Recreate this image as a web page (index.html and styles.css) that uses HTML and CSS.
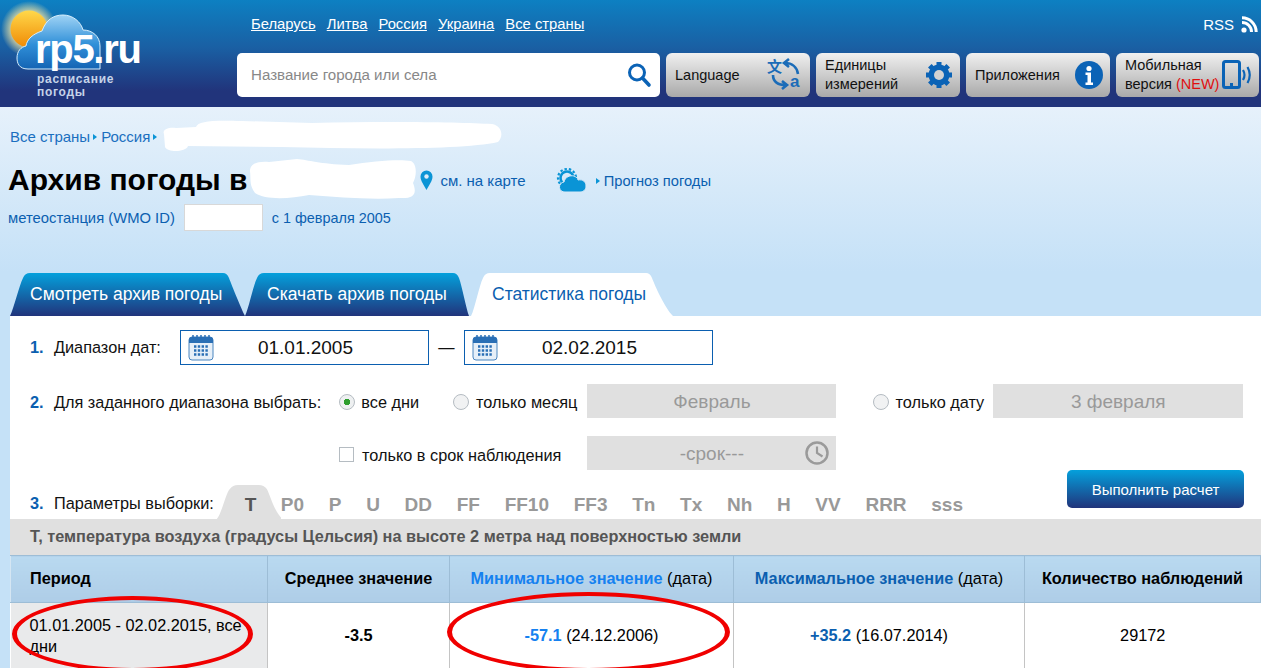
FILE: index.html
```html
<!DOCTYPE html>
<html lang="ru">
<head>
    <meta charset="UTF-8">
    <title>Архив погоды - rp5.ru</title>
    <link rel="stylesheet" href="styles.css">
</head>
<body>
    <header class="site-header">
        <a class="logo" href="#">
            <svg class="logo-art" width="110" height="75" viewBox="0 0 110 75">
                <defs>
                    <radialGradient id="sunGlow"><stop offset="0.6" stop-color="#ffe9a0" stop-opacity="0.8"/><stop offset="1" stop-color="#ffe9a0" stop-opacity="0"/></radialGradient>
                    <linearGradient id="sunFill" x1="0" y1="0" x2="0" y2="1"><stop offset="0" stop-color="#ffd84a"/><stop offset="1" stop-color="#f08a05"/></linearGradient>
                    <linearGradient id="cloudFill" x1="0" y1="0" x2="0" y2="1"><stop offset="0" stop-color="#9fd3f5"/><stop offset="0.55" stop-color="#2f8fd8"/><stop offset="1" stop-color="#1464b4"/></linearGradient>
                </defs>
                <circle cx="29" cy="29" r="28" fill="url(#sunGlow)"/>
                <circle cx="29" cy="29" r="18.5" fill="url(#sunFill)"/>
                <path d="M28 69 C19 69 17 63 17 58 C17 51 21 47 26 46 C27 39 33 34 42 31 C46 20 53 15 63 15 C73 15 81 22 83 30 C92 30 100 36 100 46 L100 69 Z" fill="url(#cloudFill)" stroke="#d7eefc" stroke-width="1"/>
            </svg>
            <span class="logo-name">rp5.ru</span>
            <span class="logo-sub">расписание<br>погоды</span>
        </a>
        <div class="header-main">
            <div class="header-top">
                <nav class="country-nav">
                    <a href="#">Беларусь</a>
                    <a href="#">Литва</a>
                    <a href="#">Россия</a>
                    <a href="#">Украина</a>
                    <a href="#">Все страны</a>
                </nav>
                <a class="rss" href="#">RSS
                    <svg width="17" height="17" viewBox="0 0 17 17"><circle cx="3" cy="14" r="2.6" fill="#fff"/><path d="M1 6.5a9.5 9.5 0 0 1 9.5 9.5M1 1.8A14.2 14.2 0 0 1 15.2 16" fill="none" stroke="#fff" stroke-width="3"/></svg>
                </a>
            </div>
            <div class="tools">
                <div class="search">
                    <span class="search-hint">Название города или села</span>
                    <svg width="26" height="26" viewBox="0 0 26 26"><circle cx="11" cy="10.500" r="7.500" fill="none" stroke="#0b63b6" stroke-width="3"/><path d="M16.500 16l6.500 7" stroke="#0b63b6" stroke-width="3.600" stroke-linecap="round"/></svg>
                </div>
                <a class="tool-btn" href="#">
                    <span>Language</span>
                    <svg width="36" height="40" viewBox="0 -3 36 40">
                        <text x="0" y="14" class="ic-zh">文</text>
                        <text x="23" y="29" class="ic-a">a</text>
                        <path d="M22 1l-5 4 5 4M18 5c7 0 12 4 13 11" fill="none" stroke="#1b6cb8" stroke-width="2.600"/>
                        <path d="M15 23l5 4-5 4M19 27c-8 0-13-3-13-10" fill="none" stroke="#1b6cb8" stroke-width="2.600"/>
                    </svg>
                </a>
                <a class="tool-btn" href="#">
                    <span>Единицы<br>измерений</span>
                    <svg width="28" height="28" viewBox="0 0 28 28"><circle cx="14" cy="14" r="7.500" fill="none" stroke="#0b63b6" stroke-width="6"/><path d="M14 1v26M1 14h26M4.800 4.800l18.400 18.400M23.200 4.800L4.800 23.200" stroke="#0b63b6" stroke-width="5"/><circle cx="14" cy="14" r="5" fill="#d2d2d2"/></svg>
                </a>
                <a class="tool-btn" href="#">
                    <span>Приложения</span>
                    <svg width="28" height="28" viewBox="0 0 28 28"><circle cx="14" cy="14" r="14" fill="#0b63b6"/><circle cx="14" cy="7.500" r="2.600" fill="#fff"/><path d="M10.500 11.500h5.500v10h2v2.500h-7.500v-2.500h2v-7.500h-2z" fill="#fff"/></svg>
                </a>
                <a class="tool-btn mobile-btn" href="#">
                    <span>Мобильная<br>версия <em>(NEW)</em></span>
                    <svg width="32" height="30" viewBox="0 0 32 30"><rect x="1.500" y="1.500" width="16" height="26" rx="2" fill="none" stroke="#0b63b6" stroke-width="3"/><rect x="8" y="23" width="3" height="3" fill="#0b63b6"/><path d="M21 10q3 5 0 10M25.500 7q4.500 8 0 16" fill="none" stroke="#0b63b6" stroke-width="2.200"/></svg>
                </a>
            </div>
        </div>
    </header>

    <main class="page">
        <div class="crumbs">
            <a href="#">Все страны</a><i class="arrow"></i><a href="#">Россия</a><i class="arrow"></i>
            <svg class="blob-crumb" width="342" height="32" viewBox="0 0 342 32"><path d="M2 14C0 10 6 7 14 8L34 7C36 1 50 0 80 1L150 3C220 1 300 2 330 4C340 6 342 16 336 22C300 30 200 29 120 27L26 26C24 32 6 33 3 27Z" fill="#fff"/></svg>
        </div>
        <div class="title-row">
            <h1>Архив погоды в</h1>
            <svg class="blob-title" width="168" height="42" viewBox="0 0 168 42"><path d="M1 12C1 4 10 2 20 3L48 0C60 1 70 5 100 6C125 2 150 0 162 2C168 5 168 16 164 24C168 34 166 40 150 39C120 41 90 38 60 36C40 40 16 41 6 34C0 26 2 20 1 12Z" fill="#fff"/></svg>
            <a class="map-link" href="#">
                <svg width="13" height="21" viewBox="0 0 13 21"><path d="M6.500 20C4 15 .5 11 .5 6.500a6 6 0 0 1 12 0C12.500 11 9 15 6.500 20z" fill="#0a94d6"/><circle cx="6.500" cy="6.500" r="2.200" fill="#dcebf8"/></svg>
                см. на карте
            </a>
            <svg class="forecast-icon" width="31" height="26" viewBox="0 0 31 26">
                <circle cx="11" cy="11" r="6.500" fill="none" stroke="#0a94d6" stroke-width="2.600"/>
                <circle cx="11" cy="11" r="9" fill="none" stroke="#0a94d6" stroke-width="2.200" stroke-dasharray="2.400 2"/>
                <path d="M9 25a5 5 0 0 1-1-10c1-5 6-7 10-6 2 1 4 2 4 4 5-1 8 2 8 6s-3 6-6 6z" fill="#0a94d6" stroke="#d8e9f8" stroke-width="1"/>
            </svg>
            <i class="arrow arrow-forecast"></i><a class="forecast-link" href="#">Прогноз погоды</a>
        </div>
        <div class="station-row">
            <span>метеостанция (WMO ID)</span>
            <span class="station-id"></span>
            <span class="station-since">с 1 февраля 2005</span>
        </div>

        <div class="tabs">
            <a class="tab tab-view" href="#">Смотреть архив погоды</a>
            <a class="tab tab-load" href="#">Скачать архив погоды</a>
            <a class="tab tab-stat" href="#">Статистика погоды</a>
        </div>

        <section class="panel">
            <div class="form-row row-dates">
                <b class="num">1.</b>
                <span class="row-label">Диапазон дат:</span>
                <div class="date-field">
                    <svg width="26" height="27" viewBox="0 0 26 27"><rect x="1" y="3" width="24" height="23" rx="3" fill="#e6eff8" stroke="#4b86c0"/><path d="M1 9V6a3 3 0 0 1 3-3h18a3 3 0 0 1 3 3v3z" fill="#2a6fb5"/><path d="M5 1v5M9 1v5M13 1v5M17 1v5M21 1v5" stroke="#2a6fb5" stroke-width="1.500"/><path d="M6 12.500h14M6 16.500h14M6 20.500h14" stroke="#2a6fb5" stroke-width="2.400" stroke-dasharray="2.400 1.400"/></svg>
                    <span>01.01.2005</span>
                </div>
                <span class="dash">—</span>
                <div class="date-field">
                    <svg width="26" height="27" viewBox="0 0 26 27"><rect x="1" y="3" width="24" height="23" rx="3" fill="#e6eff8" stroke="#4b86c0"/><path d="M1 9V6a3 3 0 0 1 3-3h18a3 3 0 0 1 3 3v3z" fill="#2a6fb5"/><path d="M5 1v5M9 1v5M13 1v5M17 1v5M21 1v5" stroke="#2a6fb5" stroke-width="1.500"/><path d="M6 12.500h14M6 16.500h14M6 20.500h14" stroke="#2a6fb5" stroke-width="2.400" stroke-dasharray="2.400 1.400"/></svg>
                    <span>02.02.2015</span>
                </div>
            </div>

            <div class="form-row row-range">
                <b class="num">2.</b>
                <span class="row-label">Для заданного диапазона выбрать:</span>
                <i class="radio radio-on"></i><span class="opt-all">все дни</span>
                <i class="radio"></i><span class="opt-month">только месяц</span>
                <div class="grey-field">Февраль</div>
                <i class="radio radio-date"></i><span class="opt-date">только дату</span>
                <div class="grey-field date-pick">3 февраля</div>
            </div>

            <div class="form-row row-term">
                <i class="check"></i><span class="opt-term">только в срок наблюдения</span>
                <div class="grey-field term-field">-срок---
                    <svg width="26" height="26" viewBox="0 0 26 26"><circle cx="13" cy="13" r="10.500" fill="none" stroke="#9a9a9a" stroke-width="2.500"/><path d="M13 6.500V13l5.500 3.500" fill="none" stroke="#9a9a9a" stroke-width="2.200"/></svg>
                </div>
            </div>

            <div class="form-row row-params">
                <b class="num">3.</b>
                <span class="row-label">Параметры выборки:</span>
                <ul class="params">
                    <li class="param-on">T</li>
                    <li>P0</li><li>P</li><li>U</li><li>DD</li><li>FF</li><li>FF10</li><li>FF3</li><li>Tn</li><li>Tx</li><li>Nh</li><li>H</li><li>VV</li><li>RRR</li><li>sss</li>
                </ul>
                <button class="run-btn">Выполнить расчет</button>
            </div>

            <div class="param-desc">T, температура воздуха (градусы Цельсия) на высоте 2 метра над поверхностью земли</div>

            <div class="table-wrap">
                <table class="stats">
                    <colgroup>
                        <col class="col-period"><col class="col-avg"><col class="col-min"><col class="col-max"><col>
                    </colgroup>
                    <tr>
                        <th class="th-period">Период</th>
                        <th>Среднее значение</th>
                        <th><b class="min">Минимальное значение</b> <span>(дата)</span></th>
                        <th><b class="max">Максимальное значение</b> <span>(дата)</span></th>
                        <th>Количество наблюдений</th>
                    </tr>
                    <tr>
                        <td class="td-period">01.01.2005 - 02.02.2015, все дни</td>
                        <td><b>-3.5</b></td>
                        <td><b class="min">-57.1</b> (24.12.2006)</td>
                        <td><b class="max">+35.2</b> (16.07.2014)</td>
                        <td>29172</td>
                    </tr>
                </table>
                <i class="mark mark-period"></i>
                <i class="mark mark-min"></i>
            </div>
        </section>
    </main>
</body>
</html>
```

FILE: styles.css
```css
html, body {
    margin: 0;
    height: 668px;
    overflow: hidden;
}
body {
    font-family: "Liberation Sans", Arial, sans-serif;
    font-size: 15px;
    color: #000;
    background: #c5e1f7;
}
a {
    color: #0b5fb0;
    text-decoration: none;
}

/* header */
.site-header {
    height: 107px;
    display: flex;
    background: linear-gradient(#0d80c2 0%, #1a5fa3 45%, #21347b 85%);
}
.logo {
    position: relative;
    display: block;
    width: 237px;
    flex: none;
}
.logo-art {
    position: absolute;
    left: 0;
    top: 0;
}
.logo-name {
    position: absolute;
    left: 35px;
    top: 27px;
    font-size: 40px;
    font-weight: bold;
    letter-spacing: -1.3px;
    color: #fff;
}
.logo-sub {
    position: absolute;
    left: 37px;
    top: 73px;
    font-size: 12px;
    line-height: 13px;
    font-weight: bold;
    letter-spacing: 0.7px;
    color: #c6d3e8;
}
.header-main {
    flex: 1;
    padding-right: 2px;
}
.header-top {
    height: 53px;
    display: flex;
    justify-content: space-between;
    align-items: flex-start;
    padding-top: 16px;
    box-sizing: border-box;
}
.country-nav {
    display: flex;
    gap: 11px;
    margin-left: 14px;
    font-size: 14.8px;
}
.country-nav a {
    color: #fff;
    text-decoration: underline;
}
.rss {
    display: flex;
    align-items: center;
    gap: 7px;
    color: #fff;
    margin-right: 1px;
}
.tools {
    display: flex;
    gap: 6px;
}
.search {
    width: 423px;
    height: 44px;
    background: #fff;
    border-radius: 5px;
    display: flex;
    align-items: center;
    justify-content: space-between;
    padding: 0 8px 0 14px;
    box-sizing: border-box;
}
.search-hint {
    color: #888;
    font-size: 15.1px;
    padding-bottom: 2px;
}
.tool-btn {
    width: 144px;
    height: 44px;
    box-sizing: border-box;
    padding: 0 7px 0 9px;
    border-radius: 6px;
    background: linear-gradient(#f0f0f0, #a9a9a9);
    color: #111;
    font-size: 14.5px;
    line-height: 19px;
    display: flex;
    align-items: center;
    justify-content: space-between;
}
.mobile-btn {
    width: 143px;
    padding-right: 5px;
}
.mobile-btn em {
    font-style: normal;
    color: #e01010;
}
.ic-zh {
    font-family: "Noto Sans CJK SC", sans-serif;
    font-size: 15px;
    font-weight: bold;
    fill: #1b6cb8;
}
.ic-a {
    font-size: 17px;
    font-weight: bold;
    fill: #1b6cb8;
}

/* top of the page */
.page {
    background: linear-gradient(#e6f1fb, #c5e1f7 165px);
    height: 561px;
}
.crumbs {
    display: flex;
    align-items: center;
    height: 28px;
    padding: 15px 0 0 10px;
}
.crumbs a {
    color: #1a6fc0;
}
.arrow {
    display: inline-block;
    border-left: 4px solid #0a94d6;
    border-top: 3px solid transparent;
    border-bottom: 3px solid transparent;
    margin: 2px 4px 0 3px;
}
.blob-crumb {
    margin-left: 1px;
    flex: none;
}
.title-row {
    display: flex;
    align-items: center;
    height: 40px;
    padding-left: 8px;
    margin-top: 10px;
}
h1 {
    margin: 0;
    font-size: 30px;
    line-height: 40px;
    font-weight: bold;
}
.blob-title {
    margin-left: 2px;
    flex: none;
}
.map-link {
    display: flex;
    align-items: center;
    gap: 7px;
    margin-left: 3px;
    padding-top: 1px;
}
.forecast-icon {
    margin-left: 30px;
}
.arrow-forecast {
    margin: 2px 4px 0 9px;
}
.forecast-link {
    font-size: 14.7px;
    padding-top: 1px;
}
.station-row {
    display: flex;
    align-items: center;
    gap: 9px;
    height: 27px;
    padding-left: 8px;
    margin-top: 4px;
    color: #0b5fb0;
    font-size: 14.8px;
}
.station-id {
    width: 79px;
    height: 27px;
    background: #fff;
    border: 1px solid #d8d8d8;
    box-sizing: border-box;
}
.station-since {
    font-size: 14.4px;
}

/* tabs */
.tabs {
    display: flex;
    height: 43px;
    margin: 42px 0 0 10px;
}
.tab {
    height: 43px;
    box-sizing: border-box;
    color: #fff;
    font-size: 17.5px;
    line-height: 43px;
    background: linear-gradient(#04a0dc, #21347b);
}
.tab-view {
    width: 235px;
    padding-left: 20px;
    clip-path: path('M0 43C4 35 9 13 13 5Q15 0 20 0L213 0Q217 0 219 5C222 13 231 35 235 43Z');
}
.tab-load {
    width: 225px;
    padding-left: 22px;
    clip-path: path('M0 43C4 35 8 13 12 5Q14 0 19 0L208 0Q212 0 214 5C217 13 221 35 224 43Z');
}
.tab-stat {
    width: 202px;
    margin-left: 1px;
    padding-left: 21px;
    color: #0b5fb0;
    background: #fff;
    clip-path: path('M0 43C4 35 8 13 12 5Q14 0 19 0L175 0Q179 0 181 5C184 13 194 35 202 43Z');
}

/* form */
.panel {
    margin-left: 10px;
    background: #fff;
    height: 352px;
}
.form-row {
    display: flex;
    align-items: center;
    color: #111;
    font-size: 16.3px;
}
.num {
    color: #0b5fb0;
    width: 24px;
    margin-left: 20px;
    flex: none;
}
.row-dates {
    height: 35px;
    padding-top: 14px;
}
.row-label {
    flex: none;
}
.row-dates .row-label {
    margin-right: 19px;
}
.date-field {
    width: 249px;
    height: 35px;
    box-sizing: border-box;
    border: 1px solid #0b5fb0;
    display: flex;
    align-items: center;
    padding-left: 7px;
    font-size: 19px;
}
.date-field span {
    margin-left: 44px;
}
.dash {
    width: 35px;
    text-align: center;
}
.row-range {
    height: 34px;
    margin-top: 19px;
}
.row-range > span, .row-range > b {
    padding-top: 3px;
}
.radio {
    width: 16px;
    height: 16px;
    box-sizing: border-box;
    border: 1px solid #b5bcc2;
    border-radius: 50%;
    background: #f1f2f3;
    flex: none;
    margin-top: 1px;
}
.radio-on {
    margin-left: 18px;
    background: radial-gradient(circle, #2e9e2e 0 3px, #eef0f1 3.500px);
}
.opt-all {
    margin: 0 34px 0 6px;
}
.opt-month {
    margin: 0 10px 0 7px;
}
.radio-date {
    margin-left: 37px;
}
.opt-date {
    margin: 0 9px 0 6px;
}
.grey-field {
    width: 249px;
    height: 34px;
    padding-top: 1px;
    box-sizing: border-box;
    background: #e0e0e0;
    color: #999;
    font-size: 19px;
    display: flex;
    align-items: center;
    justify-content: center;
    flex: none;
}
.date-pick {
    width: 250px;
}
.row-term {
    height: 34px;
    margin-top: 18px;
    padding-left: 329px;
}
.check {
    width: 15px;
    height: 15px;
    box-sizing: border-box;
    border: 1px solid #b5bcc2;
    flex: none;
    margin-top: 2px;
}
.opt-term {
    margin: 0 26px 0 8px;
    padding-top: 4px;
}
.term-field {
    position: relative;
}
.term-field svg {
    position: absolute;
    right: 6px;
    top: 4px;
}
.row-params {
    height: 49px;
    align-items: flex-end;
}
.row-params .num, .row-params .row-label {
    margin-bottom: 6px;
}
.params {
    display: flex;
    list-style: none;
    margin: 0 0 0 3px;
    padding: 0;
    height: 34px;
    font-size: 19px;
    font-weight: bold;
    color: #999;
    line-height: 39px;
    gap: 24.7px;
}
.param-on {
    color: #555;
    width: 64px;
    margin-right: -24.7px;
    padding-left: 28px;
    box-sizing: border-box;
    background: #e0e0e0;
    clip-path: path('M0 34C5 28 9 8 13 4Q16 0 21 0L42 0Q47 0 50 4C54 12 58 28 66 34Z');
}
.run-btn {
    width: 177px;
    height: 38px;
    margin: 0 17px 11px auto;
    align-self: flex-start;
    border: none;
    border-radius: 5px;
    background: linear-gradient(#04a0dc, #21347b);
    color: #fff;
    font-family: inherit;
    font-size: 15px;
}
.param-desc {
    height: 36px;
    background: #e0e0e0;
    color: #555;
    font-weight: bold;
    line-height: 34px;
    padding-left: 20px;
    font-size: 16.3px;
}

/* table */
.table-wrap {
    position: relative;
}
.stats {
    width: 100%;
    table-layout: fixed;
    border-collapse: collapse;
    font-size: 16.3px;
}
.col-period { width: 257px; }
.col-avg { width: 182px; }
.col-min { width: 284px; }
.col-max { width: 291px; }
.stats th {
    height: 44px;
    padding: 0 0 2px;
    background: linear-gradient(#b9d9f0, #aecde7);
    border: 1px solid #9dbdd6;
    border-left: 1px solid #d5e6f3;
}
.stats th span {
    font-weight: normal;
}
.stats .th-period {
    text-align: left;
    padding-left: 19px;
}
.stats td {
    height: 64px;
    padding: 0 0 2px;
    border-left: 1px solid #c4c4c4;
    text-align: center;
}
.stats .td-period {
    text-align: left;
    padding: 0 10px 0 19px;
    background: #e9eaeb;
    line-height: 21px;
    border-left: none;
}
.min {
    color: #1581f0;
}
.max {
    color: #0b5fb0;
}
.mark {
    position: absolute;
    box-sizing: border-box;
    border: solid #f00000;
    border-width: 4px 5px;
    border-radius: 50%;
}
.mark-period {
    left: 2px;
    top: 41px;
    width: 241px;
    height: 76px;
}
.mark-min {
    left: 437px;
    top: 37px;
    width: 283px;
    height: 80px;
}
```
